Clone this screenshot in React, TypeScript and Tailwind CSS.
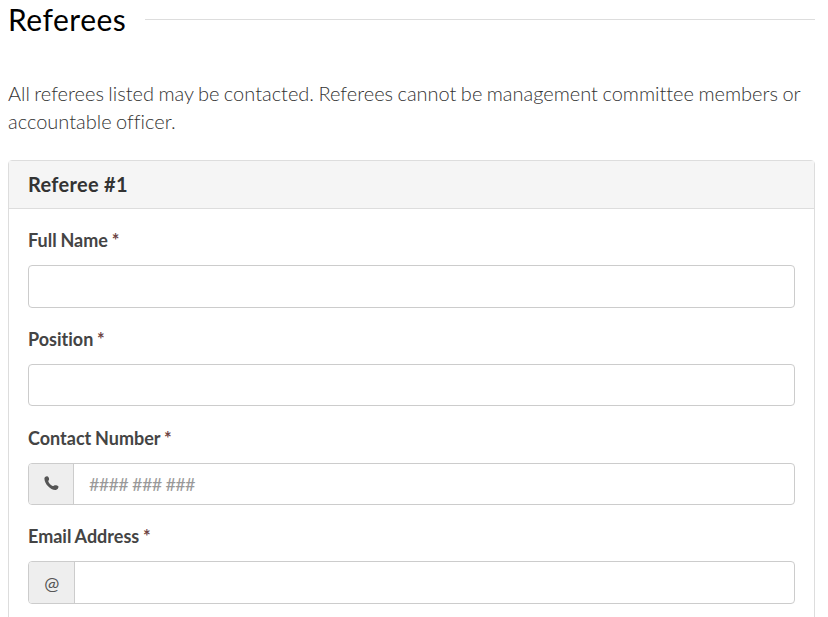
import type { ReactNode } from 'react';

interface FieldProps {
    label: string;
    placeholder?: string;
    addon?: ReactNode;
}

const PhoneIcon = () => (
    <svg viewBox="0 0 15 16" className="mb-[3px] ml-px h-4 w-[15px]" fill="currentColor">
        <path d="M.4 3.8C.3 2.2 1.8 1 3.3 1.2 4.5 1.5 5.1 3 5.1 4.3 5 5.2 4 5.8 4.4 6.7 5.1 8.4 6.9 10.2 8.6 10.9 9.5 11.3 9.8 10.4 10.7 10.2 12 10.1 14 10.6 14.5 11.6 14.7 13.1 13.4 14.7 11.7 15 6.8 15.4.7 9.3.4 3.8Z" />
    </svg>
);

const Field = ({ label, placeholder, addon }: FieldProps) => (
    <label className="mb-[14.6px] block">
        <span className="block h-[41.6px] pt-[3.6px] text-[18px] leading-[26px] font-bold text-[#444] [font-variant-ligatures:none] [word-spacing:-0.6px]">
            {label} <span className="text-[#6d4444]">*</span>
        </span>
        <span className="flex h-[42.4px] overflow-hidden rounded-[4px] border border-[#ccc] bg-white">
            {addon && (
                <span className="flex shrink-0 items-center justify-center border-r border-[#ccc] bg-[#eee] px-[14px] pt-[2px] text-[18px] text-[#555]">
                    {addon}
                </span>
            )}
            <input
                className="min-w-0 flex-1 px-[15px] pt-[1.5px] text-[18px] text-[#555] outline-none placeholder:tracking-[-0.65px] placeholder:text-[#999]"
                placeholder={placeholder}
            />
        </span>
    </label>
);

export default function App() {
    return (
        <div className="h-[617px] overflow-hidden bg-white pl-2 pr-[13px] font-[Lato,sans-serif]">
            <div className="flex h-[39px] items-center gap-[19px]">
                <h2 className="text-[30px] leading-[39px] tracking-[0.5px] text-black">Referees</h2>
                <div className="h-px flex-1 bg-[#ddd]" />
            </div>
            <p className="mt-10 text-[20px] leading-7 font-light text-[#333] [font-variant-ligatures:none] [word-spacing:-1px]">
                All referees listed may be contacted. Referees cannot be management committee members or
                accountable officer.
            </p>
            <section className="mt-[25px] h-[520px] rounded-[4px] border border-[#ddd]">
                <h3 className="flex h-12 items-center border-b border-[#ddd] bg-[#f5f5f5] px-[19px] pb-px text-[20px] font-bold tracking-[0.3px] text-[#333]">
                    Referee #1
                </h3>
                <div className="px-[19px] pt-[14.8px]">
                    <Field label="Full Name" />
                    <Field label="Position" />
                    <Field label="Contact Number" addon={<PhoneIcon />} placeholder="#### ### ###" />
                    <Field label="Email Address" addon={<span className="px-[1.2px] pt-px">@</span>} />
                </div>
            </section>
        </div>
    );
}
